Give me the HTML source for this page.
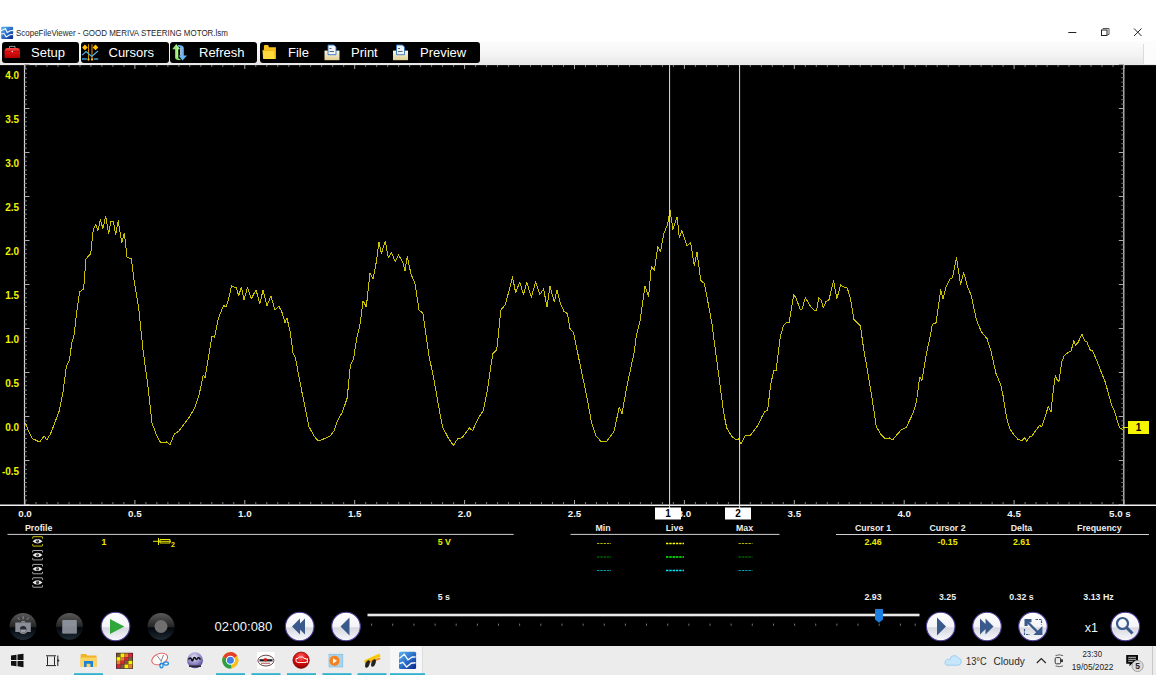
<!DOCTYPE html>
<html><head><meta charset="utf-8">
<style>
html,body{margin:0;padding:0;}
body{width:1156px;height:700px;position:relative;overflow:hidden;background:#fff;font-family:"Liberation Sans",sans-serif;}
.abs{position:absolute;}
#title{left:16px;top:27px;font-size:9.6px;color:#262626;white-space:nowrap;transform:scaleX(0.83);transform-origin:0 0;}
#strip{left:0;top:41px;width:1156px;height:24px;background:linear-gradient(#fdfdfd,#f3f3f3 60%,#e6e6e6);}
.btn{position:absolute;top:41.5px;height:21.5px;background:#000;border-radius:3px;}
.bt{position:absolute;top:44.7px;font-size:13px;color:#fff;white-space:nowrap;}
#plot{left:0;top:65px;width:1156px;height:581px;background:#000;}
#task{left:0;top:646px;width:1156px;height:29px;background:#ececec;}
svg{position:absolute;left:0;top:0;overflow:visible;}
</style></head><body>
<!-- title bar -->
<svg width="1156" height="700" style="z-index:1">
 <rect x="1.2" y="26.8" width="11.9" height="12.1" rx="1" fill="url(#ic)"/>
 <path d="M1.2,30.7L5.4,28.5L7.2,32.5L10.3,30.7L13.1,30.4" stroke="#f4f8ff" stroke-width="1.1" fill="none"/>
 <path d="M1.2,34.3L3.9,33.3L6.2,36.9L9.8,34.8L13.1,34.5" stroke="#f4f8ff" stroke-width="1.1" fill="none"/>
</svg>
<div id="title" class="abs">ScopeFileViewer - GOOD MERIVA STEERING MOTOR.lsm</div>
<svg width="1156" height="700" style="z-index:1">
 <path d="M1068.3,32.5h8" stroke="#222" stroke-width="1"/>
 <rect x="1101.5" y="30" width="5.5" height="5.5" fill="none" stroke="#222" stroke-width="1"/>
 <path d="M1103,29.5v-1h6v6h-1.5" fill="none" stroke="#555" stroke-width="1"/>
 <path d="M1134,28.5l7.5,7.5M1141.5,28.5l-7.5,7.5" stroke="#222" stroke-width="1"/>
</svg>
<div id="strip" class="abs"></div>
<div class="abs" style="left:1144px;top:41px;width:12px;height:24px;background:#fcfcfc"></div><div class="abs" style="left:1143px;top:44px;width:1px;height:20px;background:#dcdcdc"></div>
<div class="btn" style="left:2.2px;width:77px"></div>
<div class="btn" style="left:80.7px;width:88px"></div>
<div class="btn" style="left:170.1px;width:87.4px"></div>
<div class="btn" style="left:260px;width:220.3px"></div>
<div class="bt" style="left:31px">Setup</div>
<div class="bt" style="left:108.5px">Cursors</div>
<div class="bt" style="left:199px">Refresh</div>
<div class="bt" style="left:288px">File</div>
<div class="bt" style="left:351px">Print</div>
<div class="bt" style="left:420px">Preview</div>
<svg width="1156" height="700" style="z-index:2">
 <defs>
  <linearGradient id="tb" x1="0" y1="0" x2="0" y2="1"><stop offset="0" stop-color="#ff4a4a"/><stop offset="0.4" stop-color="#e01010"/><stop offset="1" stop-color="#b00000"/></linearGradient>
  <linearGradient id="tray" x1="0" y1="0" x2="0" y2="1"><stop offset="0" stop-color="#fbf6e6"/><stop offset="1" stop-color="#e2cf92"/></linearGradient>
  <linearGradient id="ic" x1="0" y1="0" x2="1" y2="1"><stop offset="0" stop-color="#5ab4f0"/><stop offset="0.5" stop-color="#2a70c8"/><stop offset="1" stop-color="#08238a"/></linearGradient>
 </defs>
 <!-- setup toolbox -->
 <path d="M4.5,51.5 q0,-3.5 3,-3.5 h9.5 q3,0 3,3.5 v6.5 h-15.5z" fill="url(#tb)"/>
 <path d="M4.5,51.3h15.5" stroke="#900" stroke-width="0.6"/>
 <path d="M9.5,48v-1.6h5.5v1.6" stroke="#aaa" stroke-width="0.9" fill="none"/>
 <circle cx="12.3" cy="51.5" r="0.8" fill="#ddd"/>
 <!-- cursors icon -->
 <path d="M88.5,44.2V60.5M92,44.2V60.5" stroke="#d68a00" stroke-width="1.1"/>
 <path d="M84.9,44.6l2.8,2.8l-2.8,2.8l-2.8,-2.8z M95.5,44.6l2.8,2.8l-2.8,2.8l-2.8,-2.8z" fill="#ffc000"/>
 <path d="M82.1,55.1L86.1,51.5L91.7,56.5L98,51" stroke="#4ab0e8" stroke-width="1.2" fill="none"/>
 <path d="M82,59h4.8M93.8,59h4.4" stroke="#3a9ed8" stroke-width="1.4"/>
 <circle cx="88.5" cy="59.4" r="1.1" fill="#ffc000"/><circle cx="92" cy="59.4" r="1.1" fill="#ffc000"/>
 <!-- refresh -->
 <path d="M176.3,44.1L180.2,49.3H178.3V57.5Q178.3,59 180.4,59V60.2Q175.1,60.2 175.1,57.5V49.3H172.2z" fill="#8ee86a"/>
 <path d="M176.3,45.5L178.6,48.6H177.2V57.2" stroke="#d8ffc8" stroke-width="0.8" fill="none"/>
 <path d="M178,45.1Q183.8,45.1 183.8,48V55.4H187L182.5,60.6L178.6,55.4H180.6V48Q180.6,46.5 178,46.5z" fill="#6cb4f4"/>
 <path d="M180.6,47.5V55.4" stroke="#cfe6ff" stroke-width="0.8"/>
 <!-- folder -->
 <path d="M263.9,59V46.2Q263.9,45.1 265,45.1H268.2L269,47.2H275.9V59z" fill="#f7c21c"/>
 <path d="M262.5,50.3H273.6L274.6,59H263.2z" fill="#ffdc3a"/>
 <path d="M262.5,50.3H273.6" stroke="#e8a000" stroke-width="0.6"/>
 <!-- print -->
 <path d="M324.5,50.6h15v9.6h-15z" fill="url(#tray)"/>
 <path d="M328,45h6l2,2v7.7h-8z" fill="#eef4fa" stroke="#2a78c8" stroke-width="0.9"/>
 <path d="M329.5,48.5h2M329.5,51.5h4.5" stroke="#555" stroke-width="0.9"/>
 <!-- preview -->
 <path d="M393,50.6h15v9.6h-15z" fill="url(#tray)"/>
 <path d="M396.5,45h6l2,2v7.7h-8z" fill="#eef4fa" stroke="#2a78c8" stroke-width="0.9"/>
 <path d="M398,48.5h2M398,51.5h4.5" stroke="#555" stroke-width="0.9"/>
</svg>
<div id="plot" class="abs"></div>
<svg width="1156" height="700" style="z-index:3">
 <path d="M0,64.6H1156" stroke="#e8e8e8" stroke-width="1"/>
 <path d="M24.5,64.5V505" stroke="#d8d8d8" stroke-width="1.2"/>
 <path d="M1123.8,64.5V505" stroke="#d8d8d8" stroke-width="1.2"/>
 <path d="M0,505.2H1156" stroke="#f2f2f2" stroke-width="1.5"/>
 <path d="M24.5,68.9h2.5 M1123.8,68.9h-2.5 M24.5,73.3h2.5 M1123.8,73.3h-2.5 M24.5,77.7h2.5 M1123.8,77.7h-2.5 M24.5,82.1h2.5 M1123.8,82.1h-2.5 M24.5,86.5h2.5 M1123.8,86.5h-2.5 M24.5,90.9h2.5 M1123.8,90.9h-2.5 M24.5,95.3h2.5 M1123.8,95.3h-2.5 M24.5,99.7h2.5 M1123.8,99.7h-2.5 M24.5,104.1h2.5 M1123.8,104.1h-2.5 M24.5,112.9h2.5 M1123.8,112.9h-2.5 M24.5,117.3h2.5 M1123.8,117.3h-2.5 M24.5,121.7h2.5 M1123.8,121.7h-2.5 M24.5,126.1h2.5 M1123.8,126.1h-2.5 M24.5,130.5h2.5 M1123.8,130.5h-2.5 M24.5,134.9h2.5 M1123.8,134.9h-2.5 M24.5,139.3h2.5 M1123.8,139.3h-2.5 M24.5,143.7h2.5 M1123.8,143.7h-2.5 M24.5,148.1h2.5 M1123.8,148.1h-2.5 M24.5,156.9h2.5 M1123.8,156.9h-2.5 M24.5,161.3h2.5 M1123.8,161.3h-2.5 M24.5,165.7h2.5 M1123.8,165.7h-2.5 M24.5,170.1h2.5 M1123.8,170.1h-2.5 M24.5,174.5h2.5 M1123.8,174.5h-2.5 M24.5,178.9h2.5 M1123.8,178.9h-2.5 M24.5,183.3h2.5 M1123.8,183.3h-2.5 M24.5,187.7h2.5 M1123.8,187.7h-2.5 M24.5,192.1h2.5 M1123.8,192.1h-2.5 M24.5,200.9h2.5 M1123.8,200.9h-2.5 M24.5,205.3h2.5 M1123.8,205.3h-2.5 M24.5,209.7h2.5 M1123.8,209.7h-2.5 M24.5,214.1h2.5 M1123.8,214.1h-2.5 M24.5,218.5h2.5 M1123.8,218.5h-2.5 M24.5,222.9h2.5 M1123.8,222.9h-2.5 M24.5,227.3h2.5 M1123.8,227.3h-2.5 M24.5,231.7h2.5 M1123.8,231.7h-2.5 M24.5,236.1h2.5 M1123.8,236.1h-2.5 M24.5,244.9h2.5 M1123.8,244.9h-2.5 M24.5,249.3h2.5 M1123.8,249.3h-2.5 M24.5,253.7h2.5 M1123.8,253.7h-2.5 M24.5,258.1h2.5 M1123.8,258.1h-2.5 M24.5,262.5h2.5 M1123.8,262.5h-2.5 M24.5,266.9h2.5 M1123.8,266.9h-2.5 M24.5,271.3h2.5 M1123.8,271.3h-2.5 M24.5,275.7h2.5 M1123.8,275.7h-2.5 M24.5,280.1h2.5 M1123.8,280.1h-2.5 M24.5,288.9h2.5 M1123.8,288.9h-2.5 M24.5,293.3h2.5 M1123.8,293.3h-2.5 M24.5,297.7h2.5 M1123.8,297.7h-2.5 M24.5,302.1h2.5 M1123.8,302.1h-2.5 M24.5,306.5h2.5 M1123.8,306.5h-2.5 M24.5,310.9h2.5 M1123.8,310.9h-2.5 M24.5,315.3h2.5 M1123.8,315.3h-2.5 M24.5,319.7h2.5 M1123.8,319.7h-2.5 M24.5,324.1h2.5 M1123.8,324.1h-2.5 M24.5,332.9h2.5 M1123.8,332.9h-2.5 M24.5,337.3h2.5 M1123.8,337.3h-2.5 M24.5,341.7h2.5 M1123.8,341.7h-2.5 M24.5,346.1h2.5 M1123.8,346.1h-2.5 M24.5,350.5h2.5 M1123.8,350.5h-2.5 M24.5,354.9h2.5 M1123.8,354.9h-2.5 M24.5,359.3h2.5 M1123.8,359.3h-2.5 M24.5,363.7h2.5 M1123.8,363.7h-2.5 M24.5,368.1h2.5 M1123.8,368.1h-2.5 M24.5,376.9h2.5 M1123.8,376.9h-2.5 M24.5,381.3h2.5 M1123.8,381.3h-2.5 M24.5,385.7h2.5 M1123.8,385.7h-2.5 M24.5,390.1h2.5 M1123.8,390.1h-2.5 M24.5,394.5h2.5 M1123.8,394.5h-2.5 M24.5,398.9h2.5 M1123.8,398.9h-2.5 M24.5,403.3h2.5 M1123.8,403.3h-2.5 M24.5,407.7h2.5 M1123.8,407.7h-2.5 M24.5,412.1h2.5 M1123.8,412.1h-2.5 M24.5,420.9h2.5 M1123.8,420.9h-2.5 M24.5,425.3h2.5 M1123.8,425.3h-2.5 M24.5,429.7h2.5 M1123.8,429.7h-2.5 M24.5,434.1h2.5 M1123.8,434.1h-2.5 M24.5,438.5h2.5 M1123.8,438.5h-2.5 M24.5,442.9h2.5 M1123.8,442.9h-2.5 M24.5,447.3h2.5 M1123.8,447.3h-2.5 M24.5,451.7h2.5 M1123.8,451.7h-2.5 M24.5,456.1h2.5 M1123.8,456.1h-2.5 M24.5,464.9h2.5 M1123.8,464.9h-2.5 M24.5,469.3h2.5 M1123.8,469.3h-2.5 M24.5,473.7h2.5 M1123.8,473.7h-2.5 M24.5,478.1h2.5 M1123.8,478.1h-2.5 M24.5,482.5h2.5 M1123.8,482.5h-2.5 M24.5,486.9h2.5 M1123.8,486.9h-2.5 M24.5,491.3h2.5 M1123.8,491.3h-2.5 M24.5,495.7h2.5 M1123.8,495.7h-2.5 M24.5,500.1h2.5 M1123.8,500.1h-2.5 M36.0,65v2 M36.0,504v-2 M47.0,65v2 M47.0,504v-2 M58.0,65v2 M58.0,504v-2 M69.0,65v2 M69.0,504v-2 M80.0,65v2 M80.0,504v-2 M90.9,65v2 M90.9,504v-2 M101.9,65v2 M101.9,504v-2 M112.9,65v2 M112.9,504v-2 M123.9,65v2 M123.9,504v-2 M145.9,65v2 M145.9,504v-2 M156.9,65v2 M156.9,504v-2 M167.9,65v2 M167.9,504v-2 M178.9,65v2 M178.9,504v-2 M189.8,65v2 M189.8,504v-2 M200.8,65v2 M200.8,504v-2 M211.8,65v2 M211.8,504v-2 M222.8,65v2 M222.8,504v-2 M233.8,65v2 M233.8,504v-2 M255.8,65v2 M255.8,504v-2 M266.8,65v2 M266.8,504v-2 M277.8,65v2 M277.8,504v-2 M288.8,65v2 M288.8,504v-2 M299.8,65v2 M299.8,504v-2 M310.7,65v2 M310.7,504v-2 M321.7,65v2 M321.7,504v-2 M332.7,65v2 M332.7,504v-2 M343.7,65v2 M343.7,504v-2 M365.7,65v2 M365.7,504v-2 M376.7,65v2 M376.7,504v-2 M387.7,65v2 M387.7,504v-2 M398.7,65v2 M398.7,504v-2 M409.7,65v2 M409.7,504v-2 M420.6,65v2 M420.6,504v-2 M431.6,65v2 M431.6,504v-2 M442.6,65v2 M442.6,504v-2 M453.6,65v2 M453.6,504v-2 M475.6,65v2 M475.6,504v-2 M486.6,65v2 M486.6,504v-2 M497.6,65v2 M497.6,504v-2 M508.6,65v2 M508.6,504v-2 M519.5,65v2 M519.5,504v-2 M530.5,65v2 M530.5,504v-2 M541.5,65v2 M541.5,504v-2 M552.5,65v2 M552.5,504v-2 M563.5,65v2 M563.5,504v-2 M585.5,65v2 M585.5,504v-2 M596.5,65v2 M596.5,504v-2 M607.5,65v2 M607.5,504v-2 M618.5,65v2 M618.5,504v-2 M629.5,65v2 M629.5,504v-2 M640.4,65v2 M640.4,504v-2 M651.4,65v2 M651.4,504v-2 M662.4,65v2 M662.4,504v-2 M673.4,65v2 M673.4,504v-2 M695.4,65v2 M695.4,504v-2 M706.4,65v2 M706.4,504v-2 M717.4,65v2 M717.4,504v-2 M728.4,65v2 M728.4,504v-2 M739.4,65v2 M739.4,504v-2 M750.3,65v2 M750.3,504v-2 M761.3,65v2 M761.3,504v-2 M772.3,65v2 M772.3,504v-2 M783.3,65v2 M783.3,504v-2 M805.3,65v2 M805.3,504v-2 M816.3,65v2 M816.3,504v-2 M827.3,65v2 M827.3,504v-2 M838.3,65v2 M838.3,504v-2 M849.2,65v2 M849.2,504v-2 M860.2,65v2 M860.2,504v-2 M871.2,65v2 M871.2,504v-2 M882.2,65v2 M882.2,504v-2 M893.2,65v2 M893.2,504v-2 M915.2,65v2 M915.2,504v-2 M926.2,65v2 M926.2,504v-2 M937.2,65v2 M937.2,504v-2 M948.2,65v2 M948.2,504v-2 M959.1,65v2 M959.1,504v-2 M970.1,65v2 M970.1,504v-2 M981.1,65v2 M981.1,504v-2 M992.1,65v2 M992.1,504v-2 M1003.1,65v2 M1003.1,504v-2 M1025.1,65v2 M1025.1,504v-2 M1036.1,65v2 M1036.1,504v-2 M1047.1,65v2 M1047.1,504v-2 M1058.1,65v2 M1058.1,504v-2 M1069.0,65v2 M1069.0,504v-2 M1080.0,65v2 M1080.0,504v-2 M1091.0,65v2 M1091.0,504v-2 M1102.0,65v2 M1102.0,504v-2 M1113.0,65v2 M1113.0,504v-2" stroke="#7a7a7a" stroke-width="1"/><path d="M24.5,64.5h5 M1123.8,64.5h-5 M24.5,108.5h5 M1123.8,108.5h-5 M24.5,152.5h5 M1123.8,152.5h-5 M24.5,196.5h5 M1123.8,196.5h-5 M24.5,240.5h5 M1123.8,240.5h-5 M24.5,284.5h5 M1123.8,284.5h-5 M24.5,328.5h5 M1123.8,328.5h-5 M24.5,372.5h5 M1123.8,372.5h-5 M24.5,416.5h5 M1123.8,416.5h-5 M24.5,460.5h5 M1123.8,460.5h-5 M24.5,504.5h5 M1123.8,504.5h-5 M25.0,65v4 M25.0,504v-4 M134.9,65v4 M134.9,504v-4 M244.8,65v4 M244.8,504v-4 M354.7,65v4 M354.7,504v-4 M464.6,65v4 M464.6,504v-4 M574.5,65v4 M574.5,504v-4 M684.4,65v4 M684.4,504v-4 M794.3,65v4 M794.3,504v-4 M904.2,65v4 M904.2,504v-4 M1014.1,65v4 M1014.1,504v-4 M1124.0,65v4 M1124.0,504v-4" stroke="#a8a8a8" stroke-width="1"/>
 <g font-size="10" font-weight="bold" fill="#f0f000"><text x="19.2" y="78.6" text-anchor="end">4.0</text><text x="19.2" y="122.6" text-anchor="end">3.5</text><text x="19.2" y="166.6" text-anchor="end">3.0</text><text x="19.2" y="210.6" text-anchor="end">2.5</text><text x="19.2" y="254.6" text-anchor="end">2.0</text><text x="19.2" y="298.6" text-anchor="end">1.5</text><text x="19.2" y="342.6" text-anchor="end">1.0</text><text x="19.2" y="386.6" text-anchor="end">0.5</text><text x="19.2" y="430.6" text-anchor="end">0.0</text><text x="19.2" y="474.6" text-anchor="end">-0.5</text></g>
 <g font-size="9.8" font-weight="bold" fill="#f4f4f4"><text x="25.0" y="516.9" text-anchor="middle">0.0</text><text x="134.9" y="516.9" text-anchor="middle">0.5</text><text x="244.8" y="516.9" text-anchor="middle">1.0</text><text x="354.7" y="516.9" text-anchor="middle">1.5</text><text x="464.6" y="516.9" text-anchor="middle">2.0</text><text x="574.5" y="516.9" text-anchor="middle">2.5</text><text x="684.4" y="516.9" text-anchor="middle">3.0</text><text x="794.3" y="516.9" text-anchor="middle">3.5</text><text x="904.2" y="516.9" text-anchor="middle">4.0</text><text x="1014.1" y="516.9" text-anchor="middle">4.5</text><text x="1109" y="516.9">5.0 s</text></g>
 <path d="M25.4,423.0 L28.9,432.0 L32.5,438.6 L39.6,442.0 L44.3,436.0 L46.8,440.0 L50.4,434.0 L54.0,425.0 L59.3,410.7 L62.9,393.0 L66.4,366.0 L69.3,360.7 L71.8,343.0 L74.3,334.0 L76.4,314.0 L79.6,292.0 L83.6,289.0 L86.0,259.0 L90.7,253.6 L93.2,230.0 L95.7,224.0 L97.9,231.0 L100.4,219.6 L102.9,228.6 L105.7,216.0 L108.6,234.0 L111.0,221.0 L113.6,222.0 L115.7,235.0 L118.2,220.7 L121.8,243.0 L124.3,233.0 L127.0,257.0 L131.4,259.0 L134.3,282.0 L138.6,307.0 L143.0,350.0 L147.9,385.7 L152.0,423.0 L157.5,437.5 L161.0,443.0 L166.4,442.0 L170.0,444.6 L174.3,434.0 L179.0,431.0 L185.0,423.0 L190.0,416.0 L194.7,407.7 L199.4,393.5 L203.2,375.0 L205.0,377.8 L208.2,359.0 L212.0,336.0 L214.5,337.5 L218.3,318.7 L222.0,309.0 L224.0,305.5 L226.0,307.0 L228.4,300.0 L231.5,286.0 L234.0,287.0 L236.5,288.0 L238.7,296.0 L241.3,287.0 L244.0,299.8 L247.5,287.5 L251.3,299.0 L256.0,289.7 L259.8,304.0 L263.0,290.4 L267.0,305.5 L271.0,296.0 L275.0,310.0 L278.7,306.0 L281.8,311.8 L285.0,322.8 L286.9,318.0 L290.0,330.6 L293.0,352.6 L295.3,357.4 L301.6,390.4 L308.9,426.5 L314.0,436.0 L318.3,441.0 L323.6,439.0 L330.0,436.0 L334.0,431.0 L337.8,420.0 L342.5,411.8 L347.2,398.0 L350.4,365.0 L353.5,359.0 L356.7,338.5 L359.8,326.0 L363.1,300.8 L366.3,307.0 L370.0,273.4 L373.2,278.7 L376.4,261.4 L378.9,242.0 L381.4,253.6 L385.2,241.0 L388.3,257.7 L391.4,252.6 L395.2,261.4 L398.4,255.0 L402.5,261.4 L405.0,271.0 L407.2,256.7 L411.0,274.0 L415.0,283.5 L419.0,310.0 L422.9,313.0 L429.0,355.8 L433.9,379.4 L438.6,406.0 L442.4,426.5 L448.0,437.5 L453.4,445.4 L457.5,439.0 L462.2,437.5 L469.4,428.0 L472.6,430.6 L478.9,417.0 L483.3,410.8 L487.4,390.0 L492.7,354.0 L496.8,349.5 L500.9,310.0 L505.3,304.8 L508.4,293.0 L512.5,277.0 L515.7,292.9 L519.7,282.0 L523.5,294.5 L526.7,282.0 L531.4,297.6 L535.5,282.0 L539.9,294.5 L543.6,289.0 L547.0,307.0 L550.0,286.4 L554.3,301.8 L557.0,290.0 L560.4,303.6 L564.0,311.4 L567.5,313.6 L570.0,328.6 L573.6,332.9 L580.0,364.3 L586.4,394.6 L591.4,422.0 L596.0,435.7 L601.4,442.0 L606.8,441.0 L614.0,431.4 L619.3,407.0 L622.0,413.6 L627.0,385.7 L634.3,351.8 L636.4,335.0 L640.0,321.4 L645.0,286.4 L648.6,297.0 L651.4,266.0 L654.3,270.7 L657.9,246.4 L660.4,251.8 L664.0,232.9 L667.5,225.0 L670.0,210.0 L672.9,229.3 L677.1,217.0 L679.3,237.5 L681.8,230.4 L687.0,245.7 L690.7,242.9 L694.3,266.0 L697.0,251.8 L700.7,280.4 L704.4,283.5 L707.9,302.0 L712.0,324.0 L715.7,352.6 L719.5,381.0 L723.6,412.4 L726.7,428.0 L731.4,436.0 L736.2,440.0 L738.4,439.0 L740.9,443.8 L745.6,435.0 L749.7,436.0 L754.0,430.6 L758.2,425.0 L761.3,418.0 L764.5,411.8 L767.6,410.0 L770.8,384.0 L773.9,370.0 L776.1,371.0 L780.2,337.0 L783.3,326.0 L786.5,322.8 L789.0,322.8 L793.7,294.5 L795.9,297.6 L800.0,309.0 L802.2,309.0 L805.3,297.6 L810.0,305.5 L813.8,310.0 L816.4,311.0 L818.9,297.6 L821.0,299.8 L823.3,308.0 L825.8,301.7 L829.0,299.8 L833.6,280.3 L836.8,299.0 L840.6,285.0 L844.0,287.0 L847.2,288.0 L850.3,297.6 L854.0,319.6 L857.2,322.8 L860.4,326.0 L863.5,348.0 L868.2,374.7 L872.5,401.4 L876.3,426.5 L881.0,434.4 L885.7,439.0 L889.5,438.0 L892.6,440.0 L896.7,435.0 L901.4,429.7 L906.2,427.5 L909.3,421.0 L913.4,412.4 L916.5,401.4 L919.7,377.0 L921.9,380.3 L926.0,355.8 L930.4,335.3 L932.3,324.3 L936.0,322.8 L940.8,289.7 L943.0,299.0 L946.1,286.6 L950.2,278.7 L952.4,277.8 L956.5,257.7 L960.6,285.0 L963.7,272.5 L967.5,286.6 L971.3,295.4 L976.3,319.6 L981.6,332.2 L987.0,338.5 L991.0,351.0 L995.8,373.0 L1001.0,385.7 L1003.2,396.4 L1006.4,416.8 L1009.6,428.6 L1013.9,434.6 L1018.2,439.7 L1022.5,440.3 L1024.6,437.6 L1026.8,441.4 L1029.6,436.7 L1032.1,436.0 L1035.4,431.0 L1039.6,425.3 L1041.8,426.8 L1045.0,416.8 L1048.2,406.7 L1051.0,411.8 L1053.1,392.1 L1055.3,375.4 L1056.8,379.3 L1058.9,381.4 L1061.7,362.1 L1064.3,355.3 L1068.1,352.5 L1071.1,351.0 L1073.9,340.3 L1075.4,345.4 L1078.2,342.4 L1081.9,333.9 L1084.6,340.7 L1086.8,341.8 L1090.0,349.7 L1092.6,351.0 L1096.4,359.6 L1100.7,370.7 L1105.0,381.4 L1108.2,392.6 L1111.4,404.6 L1114.6,411.4 L1117.4,421.0 L1119.6,427.5 L1122.6,429.6" stroke="#cac200" stroke-width="1" fill="none" stroke-linejoin="round" shape-rendering="crispEdges"/>
 <path d="M1122.6,427.5H1128" stroke="#f0f000" stroke-width="1"/>
 <rect x="1128" y="421" width="21" height="13" fill="#f5f500"/>
 <text x="1138.5" y="431.3" font-size="10" font-weight="bold" text-anchor="middle" fill="#000">1</text>
 <!-- cursors -->
 <path d="M669.6,65V508M739.6,65V508" stroke="#e0e0e0" stroke-width="1"/>
 <rect x="655" y="507.5" width="26" height="12" fill="#fff"/>
 <rect x="725" y="507.5" width="26" height="12" fill="#fff"/>
 <text x="668" y="516.6" font-size="10" font-weight="bold" text-anchor="middle" fill="#000">1</text>
 <text x="738" y="516.6" font-size="10" font-weight="bold" text-anchor="middle" fill="#000">2</text>
 <!-- info panel -->
 <path d="M7.5,534.4H513.7M570.5,534.4H779.5M836,534.5H1149" stroke="#d0d0d0" stroke-width="1"/>
 <g font-size="8.8" font-weight="bold" fill="#ededed">
  <text x="25" y="530.6">Profile</text>
  <text x="603" y="530.6" text-anchor="middle">Min</text>
  <text x="674.5" y="530.6" text-anchor="middle">Live</text>
  <text x="744.5" y="530.6" text-anchor="middle">Max</text>
  <text x="873" y="530.6" text-anchor="middle">Cursor 1</text>
  <text x="947.5" y="530.6" text-anchor="middle">Cursor 2</text>
  <text x="1021.5" y="530.6" text-anchor="middle">Delta</text>
  <text x="1099.3" y="530.6" text-anchor="middle">Frequency</text>
  <text x="873" y="599.6" text-anchor="middle">2.93</text>
  <text x="947.5" y="599.6" text-anchor="middle">3.25</text>
  <text x="1021.5" y="599.6" text-anchor="middle">0.32 s</text>
  <text x="1098.5" y="599.6" text-anchor="middle">3.13 Hz</text>
  <text x="437.7" y="599.8">5 s</text>
 </g>
 <g font-size="8.8" font-weight="bold" fill="#eaea00">
  <text x="873" y="545.3" text-anchor="middle">2.46</text>
  <text x="947.5" y="545.3" text-anchor="middle">-0.15</text>
  <text x="1021.5" y="545.3" text-anchor="middle">2.61</text>
  <text x="437.7" y="545.3">5 V</text>
  <text x="101.5" y="545.3">1</text>
 </g>
 <!-- dashes -->
 <g stroke-width="1" stroke-dasharray="2.4,0.9">
  <path d="M597,543.5h14M738.5,543.5h14" stroke="#b0b000"/>
  <path d="M666,543.5h18" stroke="#ffff00" stroke-width="1.6"/>
  <path d="M597,557h14M738.5,557h14" stroke="#009000"/>
  <path d="M666,557h18" stroke="#00ff00" stroke-width="1.6"/>
  <path d="M597,570.5h14M738.5,570.5h14" stroke="#00a0b0"/>
  <path d="M666,570.5h18" stroke="#00e8ff" stroke-width="1.6"/>
 </g>
 <!-- profile eyes -->
 <path d="M32.7,538.7v-1.6q0,-0.4 0.4,-0.4h9q0.4,0 0.4,0.4v1.6M32.7,544.1v1.6q0,0.4 0.4,0.4h9q0.4,0 0.4,-0.4v-1.6" fill="none" stroke="#c8bc00" stroke-width="1"/>
 <path d="M32.5,541.2q5,-4.4 10,0q-5,4.4 -10,0z" fill="#e8e8e8"/>
 <circle cx="37.5" cy="541.2" r="1.6" fill="#2a2a2a"/><circle cx="37" cy="540.6" r="0.5" fill="#fff"/>
 <path d="M32.7,552.5v-1.6q0,-0.4 0.4,-0.4h9q0.4,0 0.4,0.4v1.6M32.7,557.9v1.6q0,0.4 0.4,0.4h9q0.4,0 0.4,-0.4v-1.6" fill="none" stroke="#a8a8a8" stroke-width="1"/>
 <path d="M32.5,555.0q5,-4.4 10,0q-5,4.4 -10,0z" fill="#e8e8e8"/>
 <circle cx="37.5" cy="555.0" r="1.6" fill="#2a2a2a"/><circle cx="37" cy="554.4" r="0.5" fill="#fff"/>
 <path d="M32.7,566.4v-1.6q0,-0.4 0.4,-0.4h9q0.4,0 0.4,0.4v1.6M32.7,571.8v1.6q0,0.4 0.4,0.4h9q0.4,0 0.4,-0.4v-1.6" fill="none" stroke="#a8a8a8" stroke-width="1"/>
 <path d="M32.5,568.9q5,-4.4 10,0q-5,4.4 -10,0z" fill="#e8e8e8"/>
 <circle cx="37.5" cy="568.9" r="1.6" fill="#2a2a2a"/><circle cx="37" cy="568.3" r="0.5" fill="#fff"/>
 <path d="M32.7,579.8v-1.6q0,-0.4 0.4,-0.4h9q0.4,0 0.4,0.4v1.6M32.7,585.2v1.6q0,0.4 0.4,0.4h9q0.4,0 0.4,-0.4v-1.6" fill="none" stroke="#a8a8a8" stroke-width="1"/>
 <path d="M32.5,582.4q5,-4.4 10,0q-5,4.4 -10,0z" fill="#e8e8e8"/>
 <circle cx="37.5" cy="582.4" r="1.6" fill="#2a2a2a"/><circle cx="37" cy="581.8" r="0.5" fill="#fff"/>
 <!-- trigger icon -->
 <path d="M153,541.3h18M158.5,538v7M160,539.5h10v3.5h-10z" stroke="#e8e800" stroke-width="1" fill="none"/>
 <text x="171" y="547" font-size="7" font-weight="bold" fill="#e8e800">2</text>
 <!-- slider -->
 <rect x="367.5" y="613.7" width="552" height="2.6" fill="#e8e8e8"/>
 <rect x="371.1" y="623.6" width="1" height="2.2" fill="#707070"/><rect x="392.2" y="623.6" width="1" height="2.2" fill="#707070"/><rect x="413.4" y="623.6" width="1" height="2.2" fill="#707070"/><rect x="434.6" y="623.6" width="1" height="2.2" fill="#707070"/><rect x="455.7" y="623.6" width="1" height="2.2" fill="#707070"/><rect x="476.9" y="623.6" width="1" height="2.2" fill="#707070"/><rect x="498.0" y="623.6" width="1" height="2.2" fill="#707070"/><rect x="519.1" y="623.6" width="1" height="2.2" fill="#707070"/><rect x="540.3" y="623.6" width="1" height="2.2" fill="#707070"/><rect x="561.5" y="623.6" width="1" height="2.2" fill="#707070"/><rect x="582.6" y="623.6" width="1" height="2.2" fill="#707070"/><rect x="603.8" y="623.6" width="1" height="2.2" fill="#707070"/><rect x="624.9" y="623.6" width="1" height="2.2" fill="#707070"/><rect x="646.0" y="623.6" width="1" height="2.2" fill="#707070"/><rect x="667.2" y="623.6" width="1" height="2.2" fill="#707070"/><rect x="688.4" y="623.6" width="1" height="2.2" fill="#707070"/><rect x="709.5" y="623.6" width="1" height="2.2" fill="#707070"/><rect x="730.6" y="623.6" width="1" height="2.2" fill="#707070"/><rect x="751.8" y="623.6" width="1" height="2.2" fill="#707070"/><rect x="773.0" y="623.6" width="1" height="2.2" fill="#707070"/><rect x="794.1" y="623.6" width="1" height="2.2" fill="#707070"/><rect x="815.2" y="623.6" width="1" height="2.2" fill="#707070"/><rect x="836.4" y="623.6" width="1" height="2.2" fill="#707070"/><rect x="857.5" y="623.6" width="1" height="2.2" fill="#707070"/><rect x="878.7" y="623.6" width="1" height="2.2" fill="#707070"/><rect x="899.9" y="623.6" width="1" height="2.2" fill="#707070"/><rect x="914.7" y="623.6" width="1" height="2.2" fill="#707070"/>
 <path d="M875,609h8v10.5l-4,3.3l-4,-3.3z" fill="#1a7fe0"/>
 <text x="214.5" y="631.3" font-size="13" fill="#f4f4f4">02:00:080</text>
 <text x="1084.7" y="631.5" font-size="12.5" fill="#f4f4f4">x1</text>
</svg>
<!-- taskbar -->
<div id="task" class="abs"></div>
<svg width="1156" height="700" style="z-index:4">
 <!-- windows logo -->
 <path d="M11,655.5l5.5,-0.8v5.2h-5.5z M17.5,654.6l6,-0.9v6.2h-6z M11,661h5.5v5.2l-5.5,-0.8z M17.5,661h6v6.2l-6,-0.9z" fill="#111"/>
 <!-- task view -->
 <path d="M46,655.8h10M46,665.6h10M47.5,656.5v8.4M54.5,656.5v8.4" stroke="#222" stroke-width="1" fill="none"/>
 <path d="M57.8,655.5v10.5" stroke="#222" stroke-width="1"/><circle cx="58.3" cy="660.5" r="1" fill="#222"/>
 <!-- explorer -->
 <path d="M80.6,667V655q0,-1 1,-1h4.5l1.2,1.5h9.2V667z" fill="#f0b429"/>
 <path d="M80.6,657.5h15.9V667H80.6z" fill="#fcd462"/>
 <path d="M84,661h9v6h-2.6v-3.3h-3.8v3.3H84z" fill="#1f7fd6"/>
 <rect x="74" y="673.2" width="29" height="1.8" fill="#2fb0cc"/>
 <!-- checker -->
 <rect x="116" y="652.8" width="17" height="16" fill="#222"/><rect x="116.60" y="653.40" width="3.95" height="3.7" fill="#7a5a3a"/><rect x="120.55" y="653.40" width="3.95" height="3.7" fill="#f8f000"/><rect x="124.50" y="653.40" width="3.95" height="3.7" fill="#e8802a"/><rect x="128.45" y="653.40" width="3.95" height="3.7" fill="#e0203a"/><rect x="116.60" y="657.10" width="3.95" height="3.7" fill="#f8f000"/><rect x="120.55" y="657.10" width="3.95" height="3.7" fill="#e8802a"/><rect x="124.50" y="657.10" width="3.95" height="3.7" fill="#e0203a"/><rect x="128.45" y="657.10" width="3.95" height="3.7" fill="#7a5a3a"/><rect x="116.60" y="660.80" width="3.95" height="3.7" fill="#e8802a"/><rect x="120.55" y="660.80" width="3.95" height="3.7" fill="#e0203a"/><rect x="124.50" y="660.80" width="3.95" height="3.7" fill="#7a5a3a"/><rect x="128.45" y="660.80" width="3.95" height="3.7" fill="#f8f000"/><rect x="116.60" y="664.50" width="3.95" height="3.7" fill="#e0203a"/><rect x="120.55" y="664.50" width="3.95" height="3.7" fill="#7a5a3a"/><rect x="124.50" y="664.50" width="3.95" height="3.7" fill="#f8f000"/><rect x="128.45" y="664.50" width="3.95" height="3.7" fill="#e8802a"/>
 <!-- scissors -->
 <ellipse cx="159.7" cy="659" rx="8.3" ry="5.3" fill="#fafafa" stroke="#e84848" stroke-width="0.9" transform="rotate(-22 159.7 659)"/>
 <path d="M157,655.5l4.5,6M163.5,655l-2.5,6.5" stroke="#8a8a8a" stroke-width="1"/>
 <ellipse cx="161.5" cy="665.5" rx="1.6" ry="2.4" fill="none" stroke="#1e88d8" stroke-width="1.2"/><ellipse cx="166" cy="663.5" rx="2.4" ry="1.6" fill="none" stroke="#1e88d8" stroke-width="1.2"/>
 <!-- purple round -->
 <defs><radialGradient id="pg" cx="0.45" cy="0.3" r="0.7"><stop offset="0" stop-color="#e8e4f8"/><stop offset="0.6" stop-color="#9088c8"/><stop offset="1" stop-color="#4a4088"/></radialGradient></defs>
 <circle cx="195" cy="660.3" r="8" fill="url(#pg)"/>
 <path d="M188.5,659.5q2,-3 3,0q1,3 2,-1q1,-2 2,0q1,2 2,0q1,-2 3,1" stroke="#111" stroke-width="1.6" fill="none"/>
 <path d="M189,666.2h12" stroke="#222" stroke-width="1.4"/>
 <!-- chrome -->
 <circle cx="230.4" cy="660.3" r="8.2" fill="#f8c21a"/>
 <path d="M230.4,660.3 L222.91,656.96 A8.2,8.2 0 0,1 237.20,655.71 Z" fill="#e0412f"/>
 <path d="M230.4,660.3 L231.40,668.44 A8.2,8.2 0 0,1 222.91,656.96 Z" fill="#2e9e48"/>
 <circle cx="230.4" cy="660.3" r="4.5" fill="#fff"/><circle cx="230.4" cy="660.3" r="3.5" fill="#3f80e8"/>
 <rect x="216" y="673.2" width="29" height="1.8" fill="#2fb0cc"/>
 <!-- white oval app -->
 <rect x="257" y="652" width="17.7" height="16.8" fill="#fff"/>
 <ellipse cx="265.9" cy="660.6" rx="8" ry="5.4" fill="#f4f4f4" stroke="#6a4a4a" stroke-width="1"/>
 <path d="M259.5,660.3h13" stroke="#222" stroke-width="2.2"/>
 <circle cx="265.5" cy="659.8" r="1.8" fill="#d02020"/>
 <path d="M261,663.3h9" stroke="#b03030" stroke-width="0.8"/>
 <rect x="251.5" y="673.2" width="29" height="1.8" fill="#2fb0cc"/>
 <!-- red circle -->
 <defs><radialGradient id="rg" cx="0.5" cy="0.3" r="0.7"><stop offset="0" stop-color="#ff6a6a"/><stop offset="0.5" stop-color="#e01010"/><stop offset="1" stop-color="#900000"/></radialGradient></defs>
 <circle cx="301.1" cy="660.2" r="8.2" fill="url(#rg)" stroke="#6a0000" stroke-width="0.6"/>
 <path d="M296,661.5v-3h2l1,-1.5h4l1,1.5h2v1l1.5,-1v4l-1.5,-1v1h-8z" fill="none" stroke="#fff" stroke-width="0.9"/>
 <rect x="287" y="673.2" width="29" height="1.8" fill="#2fb0cc"/>
 <!-- media player -->
 <rect x="329" y="654.2" width="13.8" height="12.8" fill="#a8d4f0" stroke="#78b8e0" stroke-width="0.6"/>
 <circle cx="334.5" cy="660.8" r="5.1" fill="#f5821f"/>
 <path d="M333,658.2v5.2l4,-2.6z" fill="#fff"/>
 <rect x="322.5" y="673.2" width="29" height="1.8" fill="#2fb0cc"/>
 <!-- yellow feet app -->
 <path d="M364,660.5l15.5,-7l1,3l-15.5,7z" fill="#f8c800"/>
 <path d="M365,662.5l15,-5l0.5,1.8l-15,5z" fill="#f08a20"/>
 <ellipse cx="367.5" cy="664" rx="2" ry="4" fill="#222" transform="rotate(20 367.5 664)"/>
 <ellipse cx="373.5" cy="663" rx="2" ry="4" fill="#222" transform="rotate(20 373.5 663)"/>
 <rect x="357.5" y="673.2" width="29" height="1.8" fill="#2fb0cc"/>
 <!-- scope active -->
 <rect x="390" y="646" width="32.3" height="29" fill="#f7f7f7"/>
 <path d="M422.5,646v29" stroke="#d8d8d8" stroke-width="0.8"/>
 <rect x="399" y="651.8" width="17.1" height="17.2" rx="1.5" fill="url(#ic)"/>
 <path d="M399.4,658.5L404.2,654.2L408,659.9L412.3,657L415.6,657" stroke="#f4f8ff" stroke-width="1.4" fill="none"/>
 <path d="M399.4,663.7L402.8,662.3L406.6,667L411.3,663.2L415.6,662.7" stroke="#f4f8ff" stroke-width="1.4" fill="none"/>
 <rect x="390" y="673.2" width="35" height="1.8" fill="#2fb0cc"/>
 <!-- tray -->
 <path d="M946.5,665.2h11.5a3.6,3.6 0 0,0 0.5,-7.1a4.6,4.6 0 0,0 -8.7,1.8a3,3 0 0,0 -3.3,5.3z" fill="#c8e6fa" stroke="#8cc8ee" stroke-width="0.8"/>
 <text x="966" y="665.4" font-size="11.3" fill="#2a2a2a" textLength="20.7" lengthAdjust="spacingAndGlyphs">13°C</text><text x="993.5" y="665.4" font-size="11.3" fill="#2a2a2a" textLength="31.3" lengthAdjust="spacingAndGlyphs">Cloudy</text>
 <path d="M1036.8,663l4.5,-4.5l4.5,4.5" stroke="#222" stroke-width="1.1" fill="none"/>
 <rect x="1055.2" y="657.6" width="5.4" height="6.2" rx="1.2" fill="none" stroke="#333" stroke-width="1"/>
 <path d="M1060.6,659.3h2.3v2.8h-2.3z" fill="#333"/>
 <path d="M1055.5,655.6q3.8,-1.6 7.6,0M1055.5,665.9q3.8,1.6 7.6,0" stroke="#444" stroke-width="0.8" fill="none"/>
 <text x="1082.5" y="657.3" font-size="8.5" fill="#222" textLength="19.5" lengthAdjust="spacingAndGlyphs">23:30</text>
 <text x="1071.7" y="670.3" font-size="8.5" fill="#222" textLength="41.7" lengthAdjust="spacingAndGlyphs">19/05/2022</text>
 <path d="M1126.2,655h11.8v8.8h-6l-2.5,2.5v-2.5h-3.3z" fill="#0a0a0a"/>
 <path d="M1128.2,657.3h7.8M1128.2,659.3h7.8M1128.2,661.3h4.5" stroke="#e8e8e8" stroke-width="0.8"/>
 <circle cx="1137.6" cy="666" r="5.6" fill="#dcdcdc" stroke="#9a9a9a" stroke-width="0.9"/>
 <text x="1137.6" y="669.2" font-size="8.5" font-weight="bold" fill="#222" text-anchor="middle">5</text>
 <path d="M1152.5,646v29" stroke="#c8c8c8" stroke-width="1"/>
</svg>
<svg width="1156" height="700" style="z-index:5">
<defs>
 <linearGradient id="gl" x1="0" y1="0" x2="0" y2="1">
  <stop offset="0" stop-color="#ffffff"/><stop offset="0.5" stop-color="#f4f4f8"/><stop offset="0.55" stop-color="#d8d8e0"/><stop offset="1" stop-color="#f8f8ff"/>
 </linearGradient>
 <linearGradient id="dk" x1="0" y1="0" x2="0" y2="1">
  <stop offset="0" stop-color="#5a5a5a"/><stop offset="0.5" stop-color="#262626"/><stop offset="0.55" stop-color="#03070c"/><stop offset="1" stop-color="#1e2a34"/>
 </linearGradient>
</defs>
<g>
 <circle cx="23" cy="626.5" r="13.5" fill="url(#dk)"/>
 <path d="M15.3,622.4h15.5v9.5h-15.5z" fill="#8a8e96"/><path d="M20.8,622.5l0.8,-1.6h3.2l0.8,1.6z" fill="#8a8e96"/><circle cx="23.2" cy="629.4" r="4.6" fill="#8a8e96"/><circle cx="23.2" cy="629.2" r="3.2" fill="#2a2a2e"/><path d="M20.2,629.6a3,3 0 0,0 6,0z" fill="#9a9ea6"/><path d="M23.2,616.2v3.2M17.8,617.6l1.8,2.2M28.6,617.6l-1.8,2.2" stroke="#8a8e96" stroke-width="1"/>
</g><g>
 <circle cx="69.5" cy="626.3" r="13.4" fill="url(#dk)"/>
 <rect x="62.3" y="620" width="14.5" height="13.5" rx="0.8" fill="#8a909a"/><rect x="62.3" y="626.5" width="14.5" height="7" fill="#7e848c" opacity="0.6"/>
</g><g>
 <circle cx="115.5" cy="626.5" r="14.3" fill="url(#gl)" stroke="#4a3c96" stroke-width="1.1"/>
 <path d="M110,619v15l14.3,-7.5z" fill="#2ea83a"/>
</g><g>
 <circle cx="161" cy="626.5" r="13.5" fill="url(#dk)"/>
 <circle cx="161" cy="626.5" r="6.5" fill="#6f6f70"/>
</g><g>
 <circle cx="299.7" cy="626.5" r="14.3" fill="url(#gl)" stroke="#4a3c96" stroke-width="1.1"/>
 <path d="M292,626.5l8,-8v16z M297,626.5l8,-8v16z" fill="#3a5a8c"/>
</g><g>
 <circle cx="346" cy="626.5" r="14.3" fill="url(#gl)" stroke="#4a3c96" stroke-width="1.1"/>
 <path d="M340.5,626.5l9,-9v18z" fill="#3a5a8c"/>
</g><g>
 <circle cx="940.7" cy="626.5" r="14.3" fill="url(#gl)" stroke="#4a3c96" stroke-width="1.1"/>
 <path d="M937,617.5l9,9l-9,9z" fill="#3a5a8c"/>
</g><g>
 <circle cx="987" cy="626.5" r="14.3" fill="url(#gl)" stroke="#4a3c96" stroke-width="1.1"/>
 <path d="M980,618.5l8,8l-8,8z M985.5,618.5l8,8l-8,8z" fill="#3a5a8c"/>
</g><g>
 <circle cx="1033" cy="626.5" r="14.3" fill="url(#gl)" stroke="#4a3c96" stroke-width="1.1"/>
 <path d="M1024.5,619h7v3.2h-3.8v3.8h-3.2z M1042.4,635h-9l9,-9z" fill="#3a5a8c"/><path d="M1027.5,622l10,10" stroke="#3a5a8c" stroke-width="2.4"/><path d="M1035.5,619.5h6v5M1024.5,629v5.5h5.5" stroke="#3a5a8c" stroke-width="1.2" fill="none" stroke-dasharray="2.5,1"/>
</g><g>
 <circle cx="1125.3" cy="626.5" r="14.3" fill="url(#gl)" stroke="#4a3c96" stroke-width="1.1"/>
 <circle cx="1122.5" cy="623.5" r="5.5" fill="none" stroke="#3a5a8c" stroke-width="2.2"/><path d="M1126.5,627.5l6,6" stroke="#3a5a8c" stroke-width="3"/>
</g></svg>
</body></html>
